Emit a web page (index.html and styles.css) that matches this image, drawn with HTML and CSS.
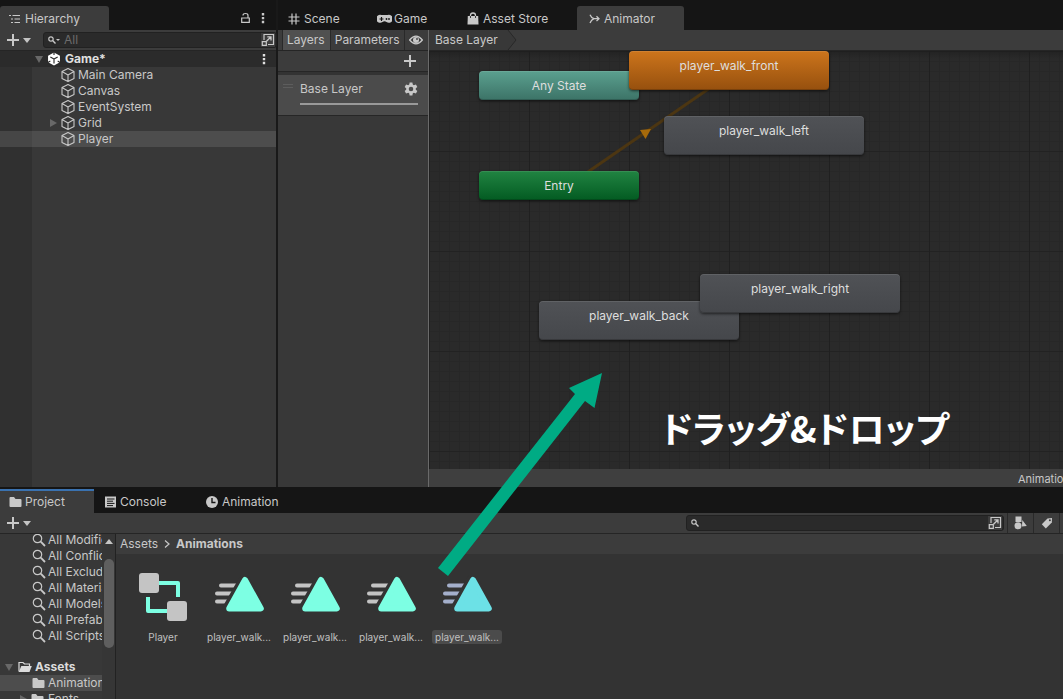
FILE: index.html
```html
<!DOCTYPE html>
<html lang="ja">
<head>
<meta charset="utf-8">
<title>Unity Editor - Animator</title>
<link rel="stylesheet" href="styles.css">
</head>
<body>
<svg class="defs" aria-hidden="true">
  <symbol id="cube" viewBox="0 0 16 16"><path d="M8 1.6 14 4.6V11.4L8 14.6 2 11.4V4.6ZM2 4.6 8 7.9 14 4.6M8 7.9V14.6" fill="none" stroke="currentColor" stroke-width="1.1" stroke-linejoin="round"/></symbol>
  <symbol id="unity" viewBox="0 0 16 16"><path d="M8 .6 14.8 4.2V11.8L8 15.4 1.2 11.8V4.2Z" fill="#fff"/><path d="M8 8V13M8 8 3.800 5.700M8 8 12.200 5.700" stroke="#2a2a2a" stroke-width="1.300"/><path d="M8 0V3.500M1 12 3.800 10.400M15 12 12.200 10.400" stroke="#2a2a2a" stroke-width="1.300"/></symbol>
  <symbol id="plus" viewBox="0 0 12 12"><path d="M6 0V12M0 6H12" stroke="currentColor" stroke-width="2"/></symbol>
  <symbol id="dots" viewBox="0 0 4 12"><path d="M.8 1H3.2V3.4H.8ZM.8 4.9H3.2V7.3H.8ZM.8 8.8H3.2V11.2H.8Z" fill="currentColor"/></symbol>
  <symbol id="glass" viewBox="0 0 14 14"><circle cx="5.5" cy="5.5" r="4.2" fill="none" stroke="currentColor" stroke-width="1.2"/><path d="M8.7 8.7 13 13" stroke="currentColor" stroke-width="1.8"/></symbol>
  <symbol id="find" viewBox="0 0 8 8"><circle cx="3" cy="3" r="2.2" fill="none" stroke="currentColor" stroke-width="1.200"/><path d="M4.6 4.6 7.5 7.5" stroke="currentColor" stroke-width="1.4"/></symbol>
  <symbol id="popout" viewBox="0 0 14 14"><path d="M3 7V1.5H12.5V11.5H7" fill="none" stroke="currentColor" stroke-width="1.200"/><path d="M1.3 8.6H5.3V12.4H1.3Z" fill="none" stroke="currentColor" stroke-width="1.200"/><path d="M5.5 8.3 9.8 4M6.3 3.8H10V7.5" fill="none" stroke="currentColor" stroke-width="1.3"/></symbol>
  <symbol id="folder" viewBox="0 0 13 12"><path d="M.5 2Q.5 1 1.5 1H5L6.5 3H11.5Q12.5 3 12.5 4V10Q12.5 11 11.5 11H1.5Q.5 11 .5 10Z" fill="currentColor"/></symbol>
  <symbol id="clip" viewBox="0 0 50 38"><path d="M7 10.500H24M3 18.500H20M3 26.500H16" stroke-width="4" stroke-linecap="round"/><path d="M30.500 4.500 46.500 33.500H14Z" fill="#333" stroke="#333" stroke-width="11" stroke-linejoin="round"/><path d="M31 5 46.800 33.500H15.200Z" fill="currentColor" stroke="currentColor" stroke-width="6" stroke-linejoin="round"/></symbol>
</svg>

<div class="editor">
  <section class="hierarchy">
    <div class="tabs">
      <button class="tab active tab-hierarchy"><svg width="12" height="10" viewBox="0 0 12 10"><path d="M0 1.500H2M3.500 1.500H11M2 5H4M5.500 5H11M2 8.500H4M5.500 8.500H11" stroke="currentColor" stroke-width="1.200"/></svg>Hierarchy</button>
      <div class="tab-tools">
        <svg width="9" height="12" viewBox="0 0 9 12"><path d="M.7 6H8.300V10.300H.7ZM2 3.500Q2 1.500 4.500 1.500T7 3.500V6" fill="none" stroke="currentColor" stroke-width="1.200"/></svg>
        <svg width="4" height="12"><use href="#dots"/></svg>
      </div>
    </div>
    <div class="toolbar">
      <button class="add" aria-label="Create"><svg width="12" height="12"><use href="#plus"/></svg><span class="caret"></span></button>
      <div class="search search-hier"><svg width="8" height="8"><use href="#find"/></svg><span class="mini-caret"></span><input type="text" placeholder="All" aria-label="Search hierarchy"><svg class="popout" width="14" height="14"><use href="#popout"/></svg></div>
    </div>
    <div class="scene-row"><span class="fold open"></span><svg width="14" height="14"><use href="#unity"/></svg><b>Game*</b><svg class="push" width="4" height="12"><use href="#dots"/></svg></div>
    <ul class="objects">
      <li><svg width="16" height="16"><use href="#cube"/></svg>Main Camera</li>
      <li><svg width="16" height="16"><use href="#cube"/></svg>Canvas</li>
      <li><svg width="16" height="16"><use href="#cube"/></svg>EventSystem</li>
      <li class="parent"><span class="fold"></span><svg width="16" height="16"><use href="#cube"/></svg>Grid</li>
      <li class="selected"><svg width="16" height="16"><use href="#cube"/></svg>Player</li>
    </ul>
  </section>

  <section class="animator">
    <div class="tabs">
      <button class="tab tab-scene"><svg width="12" height="12" viewBox="0 0 12 12"><path d="M4 .5V11.500M8 .5V11.500M.5 4H11.500M.5 8H11.500" stroke="currentColor" stroke-width="1.200"/></svg>Scene</button>
      <button class="tab tab-game"><svg width="15" height="10" viewBox="0 0 15 10"><path d="M4.500 1H10.500A4 4 0 1 1 9.500 8Q7.500 6.500 5.500 8A4 4 0 1 1 4.500 1Z" fill="currentColor"/><path d="M2.500 5H6.500M4.500 3V7" stroke="#151515" stroke-width="1.200"/><circle cx="9.500" cy="5" r=".9" fill="#151515"/><circle cx="12" cy="5" r=".9" fill="#151515"/></svg>Game</button>
      <button class="tab tab-store"><svg width="12" height="13" viewBox="0 0 12 13"><path d="M.8 4H11.200L11.500 12.500H.5Z" fill="currentColor"/><path d="M3.500 5V3.500A2.500 2.500 0 0 1 8.500 3.500V5" fill="none" stroke="currentColor" stroke-width="1.300"/><path d="M3.500 4V6M8.500 4V6" stroke="#151515" stroke-width=".8"/></svg>Asset Store</button>
      <button class="tab active tab-animator"><svg width="11" height="10" viewBox="0 0 11 10"><path d="M1 .8Q2.300 4 5 4.700H10M1 9Q2.300 5.800 5 4.700M7.500 2.300 10 4.700 7.500 7" fill="none" stroke="currentColor" stroke-width="1.300"/></svg>Animator</button>
    </div>
    <div class="workspace">
      <div class="layers">
        <div class="toolbar">
          <button class="seg on">Layers</button><button class="seg">Parameters</button>
          <button class="seg eye" aria-label="Toggle"><svg width="14" height="10" viewBox="0 0 14 10"><path d="M.6 5Q7-2.600 13.400 5 7 12.600.6 5Z" fill="none" stroke="currentColor" stroke-width="1.200"/><circle cx="7" cy="5" r="3" fill="currentColor"/><circle cx="8" cy="4" r=".9" fill="#3c3c3c"/></svg></button>
        </div>
        <div class="add-row"><button aria-label="Add layer"><svg width="12" height="12"><use href="#plus"/></svg></button></div>
        <div class="layer">
          <span class="grip"></span>
          <div class="layer-main">
            <div class="layer-name">Base Layer<svg width="14" height="14" viewBox="-7 -7 14 14"><g fill="currentColor"><path id="tooth" d="M-1.400-6.500H1.400L1.900-3.500H-1.900Z"/><use href="#tooth" transform="rotate(60)"/><use href="#tooth" transform="rotate(120)"/><use href="#tooth" transform="rotate(180)"/><use href="#tooth" transform="rotate(240)"/><use href="#tooth" transform="rotate(300)"/></g><circle r="3.500" fill="none" stroke="currentColor" stroke-width="2.400"/></svg></div>
            <div class="weight"></div>
          </div>
        </div>
      </div>
      <div class="graph-pane">
        <div class="crumb-bar"><span class="crumb">Base Layer</span><svg width="15" height="20" viewBox="0 0 15 20"><path d="M0 0H6L14 10 6 20H0Z" fill="#383838"/><path d="M6 0 14 10 6 20" fill="none" stroke="#292929"/></svg></div>
        <div class="graph">
          <div class="node any">Any State</div>
          <svg class="edge" width="140" height="100" viewBox="0 0 140 100"><path d="M3 95 141 0" stroke="#4c3612" stroke-width="3"/><path d="M61 49 72 48 66.500 58Z" fill="#a66a0b"/></svg>
          <div class="node front">player_walk_front</div>
          <div class="node left">player_walk_left</div>
          <div class="node entry">Entry</div>
          <div class="node back">player_walk_back</div>
          <div class="node right">player_walk_right</div>
          <p class="caption">ドラッグ&amp;ドロップ</p>
        </div>
        <div class="status">Animations/Player.controller</div>
      </div>
    </div>
  </section>

  <section class="project">
    <div class="tabs">
      <button class="tab active tab-project"><svg width="13" height="12"><use href="#folder"/></svg>Project</button>
      <button class="tab tab-console"><svg width="11" height="12" viewBox="0 0 11 12"><path d="M0 .5H11V11.500H0Z" fill="currentColor"/><path d="M2 3H9.500M2 5.200H8M2 7.400H9.500M2 9.600H8" stroke="#151515"/></svg>Console</button>
      <button class="tab tab-animation"><svg width="12" height="12" viewBox="0 0 12 12"><circle cx="6" cy="6" r="6" fill="currentColor"/><path d="M6 2V6.500H9.500" fill="none" stroke="#151515" stroke-width="1.400"/></svg>Animation</button>
    </div>
    <div class="toolbar">
      <button class="add" aria-label="Create"><svg width="12" height="12"><use href="#plus"/></svg><span class="caret"></span></button>
      <div class="search search-proj"><svg width="8" height="8"><use href="#find"/></svg><input type="text" aria-label="Search project"><svg class="popout" width="14" height="14"><use href="#popout"/></svg></div>
      <button class="tool" aria-label="Search by type"><svg width="13" height="14" viewBox="0 0 13 14"><path d="M1.500 .5H7.500V6H1.500ZM8.300 4 12.800 10 8 10.500Z" fill="currentColor"/><circle cx="4" cy="9.800" r="3.500" fill="currentColor"/></svg></button>
      <button class="tool" aria-label="Search by label"><svg width="12" height="12" viewBox="0 0 12 12"><path d="M6.500 1.500 11 1 10.800 5.500 4.800 11.500.8 7.300Z" fill="currentColor"/><circle cx="8.900" cy="3.200" r="1" fill="#3c3c3c"/></svg></button>
      <span class="tool-end"></span>
    </div>
    <div class="browser">
      <div class="tree">
        <ul class="favorites">
          <li><svg width="14" height="14"><use href="#glass"/></svg>All Modified</li>
          <li><svg width="14" height="14"><use href="#glass"/></svg>All Conflicts</li>
          <li><svg width="14" height="14"><use href="#glass"/></svg>All Excluded</li>
          <li><svg width="14" height="14"><use href="#glass"/></svg>All Materials</li>
          <li><svg width="14" height="14"><use href="#glass"/></svg>All Models</li>
          <li><svg width="14" height="14"><use href="#glass"/></svg>All Prefabs</li>
          <li><svg width="14" height="14"><use href="#glass"/></svg>All Scripts</li>
        </ul>
        <ul class="folders">
          <li class="root"><span class="fold open"></span><svg width="14" height="12" viewBox="0 0 14 12"><path d="M1 10.500V1.500H5L6.500 3H11.500V5" fill="none" stroke="currentColor" stroke-width="1.200"/><path d="M3.300 5H13.800L11.500 11H.8Z" fill="currentColor"/></svg><b>Assets</b></li>
          <li class="selected"><svg width="13" height="12"><use href="#folder"/></svg>Animations</li>
          <li class="parent"><span class="fold"></span><svg width="13" height="12"><use href="#folder"/></svg>Fonts</li>
        </ul>
      </div>
      <div class="scroll"><span class="scroll-up"></span><span class="thumb"></span></div>
      <div class="content">
        <nav class="path"><a href="#">Assets</a><svg width="6" height="8" viewBox="0 0 6 8"><path d="M1 .5 5 4 1 7.500" fill="none" stroke="currentColor" stroke-width="1.200"/></svg><b>Animations</b></nav>
        <div class="items">
          <figure><svg width="50" height="50" viewBox="0 0 50 50"><path d="M20 11H40V25M10 25V39H30" fill="none" stroke="#7dffe3" stroke-width="4" stroke-linejoin="round"/><rect x="1" y="1" width="20" height="20" rx="3" fill="#c4c4c4"/><rect x="29" y="29" width="20" height="20" rx="3" fill="#c4c4c4"/></svg><figcaption>Player</figcaption></figure>
          <figure><svg class="clip" width="50" height="38"><use href="#clip"/></svg><figcaption>player_walk...</figcaption></figure>
          <figure><svg class="clip" width="50" height="38"><use href="#clip"/></svg><figcaption>player_walk...</figcaption></figure>
          <figure><svg class="clip" width="50" height="38"><use href="#clip"/></svg><figcaption>player_walk...</figcaption></figure>
          <figure class="picked"><svg class="clip" width="50" height="38"><use href="#clip"/></svg><figcaption>player_walk...</figcaption></figure>
        </div>
      </div>
    </div>
  </section>
  <svg class="drag-arrow" width="170" height="210" viewBox="0 0 170 210"><path d="M165 3 157.500 38 148 31 11 206 1 198 138 24 132 18Z" fill="#00ab84"/></svg>
</div>
</body>
</html>
```

FILE: styles.css
```css
* { box-sizing: border-box; }
body {
  margin: 0;
  background: #141414;
  color: #c8c8c8;
  font: 12px/16px Inter, "Noto Sans CJK JP", sans-serif;
  overflow: hidden;
}
ul, figure, p { margin: 0; padding: 0; list-style: none; }
button { border: 0; padding: 0; background: none; color: inherit; font: inherit; }
svg { flex: none; display: block; }
b { font-weight: 700; }
.defs { position: absolute; width: 0; height: 0; }

.editor {
  position: relative;
  height: 100vh;
  display: grid;
  grid-template-columns: 278px minmax(0, 1fr);
  grid-template-rows: minmax(0, 1fr) 212px;
}

/* Tabs and toolbars */
.tabs { display: flex; height: 30px; padding-top: 6px; background: #151515; flex: none; }
.tab { display: flex; align-items: center; gap: 4px; padding: 1px 0 0 11px; white-space: nowrap; }
.tab.active { background: #3c3c3c; border-radius: 3px 3px 0 0; }
.tab-tools { display: flex; align-items: center; gap: 11px; margin-left: auto; padding-right: 11px; }
.tab-hierarchy { width: 109px; padding-left: 9px; }
.tab-scene { width: 88px; padding-left: 10px; }
.tab-game { width: 90px; gap: 2px; }
.tab-store { width: 121px; }
.tab-animator { width: 107px; padding-left: 12px; }
.toolbar {
  display: flex;
  align-items: center;
  flex: none;
  height: 21px;
  background: #3c3c3c;
  border-bottom: 1px solid #252525;
}
.add { display: flex; align-items: center; gap: 4px; margin-left: 7px; }
.caret { border: 4px solid transparent; border-top: 5px solid #c4c4c4; border-bottom: 0; }
.mini-caret { border: 2px solid transparent; border-top-color: #c4c4c4; border-bottom: 0; }
.search {
  display: flex;
  align-items: center;
  height: 16px;
  background: #2a2a2a;
  border: 1px solid #212121;
  border-radius: 3px;
}
.popout { margin: 0 1px; background: #3c3c3c; }
.search input {
  flex: 1;
  min-width: 0;
  border: 0;
  padding: 0 4px;
  background: none;
  color: inherit;
  font: inherit;
  line-height: 14px;
  outline: 0;
}
.search input::placeholder { color: #6c6c6c; opacity: 1; }
.search-hier { flex: 1; margin: 0 4px 0 12px; padding-left: 4px; }
.fold { border: 4px solid transparent; border-left: 7px solid #686868; border-right: 0; }
.fold.open { border: 4px solid transparent; border-top: 7px solid #686868; border-bottom: 0; }

/* Hierarchy */
.hierarchy {
  display: flex;
  flex-direction: column;
  background: linear-gradient(90deg, #303030 32px, #383838 32px);
  border-right: 2px solid #191919;
}
.scene-row { display: flex; align-items: center; height: 16px; padding: 0 10px 0 35px; background: #2b2b2b; color: #e0e0e0; }
.scene-row svg { margin-left: 4px; }
.scene-row b { margin-left: 4px; }
.scene-row .push { margin-left: auto; }
.objects li { display: flex; align-items: center; gap: 2px; height: 16px; padding-left: 60px; }
.objects .parent { padding-left: 50px; }
.objects .parent .fold { margin-right: 1px; }
.objects .selected { background: linear-gradient(90deg, #464646 32px, #4d4d4d 32px); }

/* Animator */
.animator { display: flex; flex-direction: column; min-width: 0; background: #282828; }
.workspace { display: flex; flex: 1; min-height: 0; }
.layers { width: 151px; flex: none; background: #383838; border-right: 1px solid #6a6a6a; }
.layers .toolbar { padding-left: 4px; }
.seg { height: 20px; padding: 0 4px; border-left: 1px solid #292929; }
.seg.on { padding-right: 5px; background: #505050; }
.seg.eye { flex: 1; padding: 0 4px; }
.add-row { display: flex; justify-content: flex-end; align-items: center; height: 21px; padding-right: 12px; background: #3c3c3c; border-bottom: 1px solid #262626; }
.layer { display: flex; gap: 7px; height: 44px; padding: 9px 10px 0 5px; background: #4b4b4b; border-top: 3px solid #333; border-bottom: 1px solid #262626; }
.grip { width: 10px; height: 4px; border: solid #5d5d5d; border-width: 1px 0; }
.layer-main { flex: 1; }
.layer-name { display: flex; justify-content: space-between; align-items: center; height: 10px; }
.weight { height: 2px; margin-top: 9px; background: #999; }
.graph-pane { display: flex; flex-direction: column; flex: 1; min-width: 0; }
.crumb-bar { display: flex; flex: none; height: 21px; background: #3c3c3c; border-bottom: 1px solid #252525; overflow: hidden; }
.crumb { padding: 2px 4px 0 6px; background: #383838; }
.graph {
  position: relative;
  flex: 1;
  overflow: hidden;
  background-color: #2a2a2a;
  background-image:
    linear-gradient(180deg, #1c1c1c88, transparent 8px),
    linear-gradient(90deg, #202020 1px, transparent 1px),
    linear-gradient(180deg, #222 1px, transparent 1px),
    linear-gradient(90deg, #272727 1px, transparent 1px),
    linear-gradient(180deg, #272727 1px, transparent 1px);
  background-size: auto, 100px 100px, 100px 100px, 10px 10px, 10px 10px;
}
.node {
  position: absolute;
  width: 200px;
  height: 39px;
  padding-top: 7px;
  border-radius: 4px;
  text-align: center;
  color: #dedede;
  background: linear-gradient(#505256, #45474b);
  box-shadow: 0 1px 3px #0009, inset 0 1px #ffffff18, inset 0 -1px #00000030;
}
.any, .entry { width: 160px; height: 29px; }
.any { left: 50px; top: 20px; background: linear-gradient(#5ba08f, #3c7367); }
.entry { left: 50px; top: 120px; background: linear-gradient(#218442, #035b22); }
.front { left: 200px; top: 0; background: linear-gradient(#cd751c, #96500e); }
.left { left: 235px; top: 65px; }
.back { left: 110px; top: 250px; }
.right { left: 271px; top: 223px; }
.edge { position: absolute; left: 150px; top: 30px; }
.caption {
  position: absolute;
  left: 232px;
  top: 346px;
  color: #fff;
  font: 700 36px/60px "Noto Sans CJK JP", sans-serif;
  font-feature-settings: "palt";
  white-space: nowrap;
}
.status { height: 18px; flex: none; background: #3f3f3f; font-size: 11px; line-height: 20px; white-space: nowrap; overflow: hidden; text-indent: calc(100% - 45px); }

/* Project */
.project { grid-column: 1 / -1; display: flex; flex-direction: column; min-width: 0; min-height: 0; }
.project .tabs { height: 26px; padding-top: 2px; }
.tab-project { width: 94px; padding-left: 9px; }
.project .tab-project { gap: 3px; border-top: 2px solid #3a72b0; border-radius: 0; padding-top: 0; }
.tab-console { width: 101px; }
.search-proj { width: 318px; margin-left: auto; margin-right: 3px; padding-left: 4px; }
.tool { display: grid; place-items: center; width: 26px; height: 20px; border-left: 1px solid #292929; }
.tool-end { width: 4px; height: 20px; border-left: 1px solid #292929; }
.browser { display: flex; flex: 1; min-height: 0; background: #333; }
.tree { width: 102px; flex: none; overflow: hidden; background: #383838; white-space: nowrap; }
.tree li { display: flex; align-items: center; gap: 2px; height: 16px; padding-left: 32px; }
.favorites { margin-top: -2px; }
.folders { padding-top: 15px; }
.tree .root { padding-left: 5px; gap: 3px; color: #dcdcdc; }
.tree .root .fold { margin-right: 2px; }
.tree .selected { gap: 3px; background: #4d4d4d; }
.tree .parent { padding-left: 20px; gap: 4px; }
.scroll { display: flex; flex-direction: column; align-items: center; flex: none; width: 14px; background: #363636; border-right: 1px solid #222; }
.scroll-up { margin-top: 5px; border: 4px solid transparent; border-bottom: 5px solid #c4c4c4; border-top: 0; }
.thumb { width: 10px; height: 89px; margin-top: 15px; border-radius: 5px; background: #5f5f5f; }
.content { flex: 1; min-width: 0; }
.path { display: flex; align-items: center; gap: 6px; height: 20px; padding-left: 4px; background: #3c3c3c; }
.path a { color: inherit; text-decoration: none; }
.items { display: flex; gap: 6px; padding: 18px 0 0 12px; }
.items figure { display: flex; flex-direction: column; align-items: center; width: 70px; height: 72px; color: #7dffe3; }
.items .clip { margin-top: 3px; stroke: #c4c4c4; }
.items .picked { color: #6ce1e6; }
.items .picked .clip { stroke: #a4afcb; }
figcaption { margin-top: auto; padding: 0 3px; border-radius: 3px; color: #c0c0c0; font-size: 10px; line-height: 14px; }
.picked figcaption { background: #4b4b4b; }

.drag-arrow { position: absolute; left: 437px; bottom: 119px; pointer-events: none; }
```
